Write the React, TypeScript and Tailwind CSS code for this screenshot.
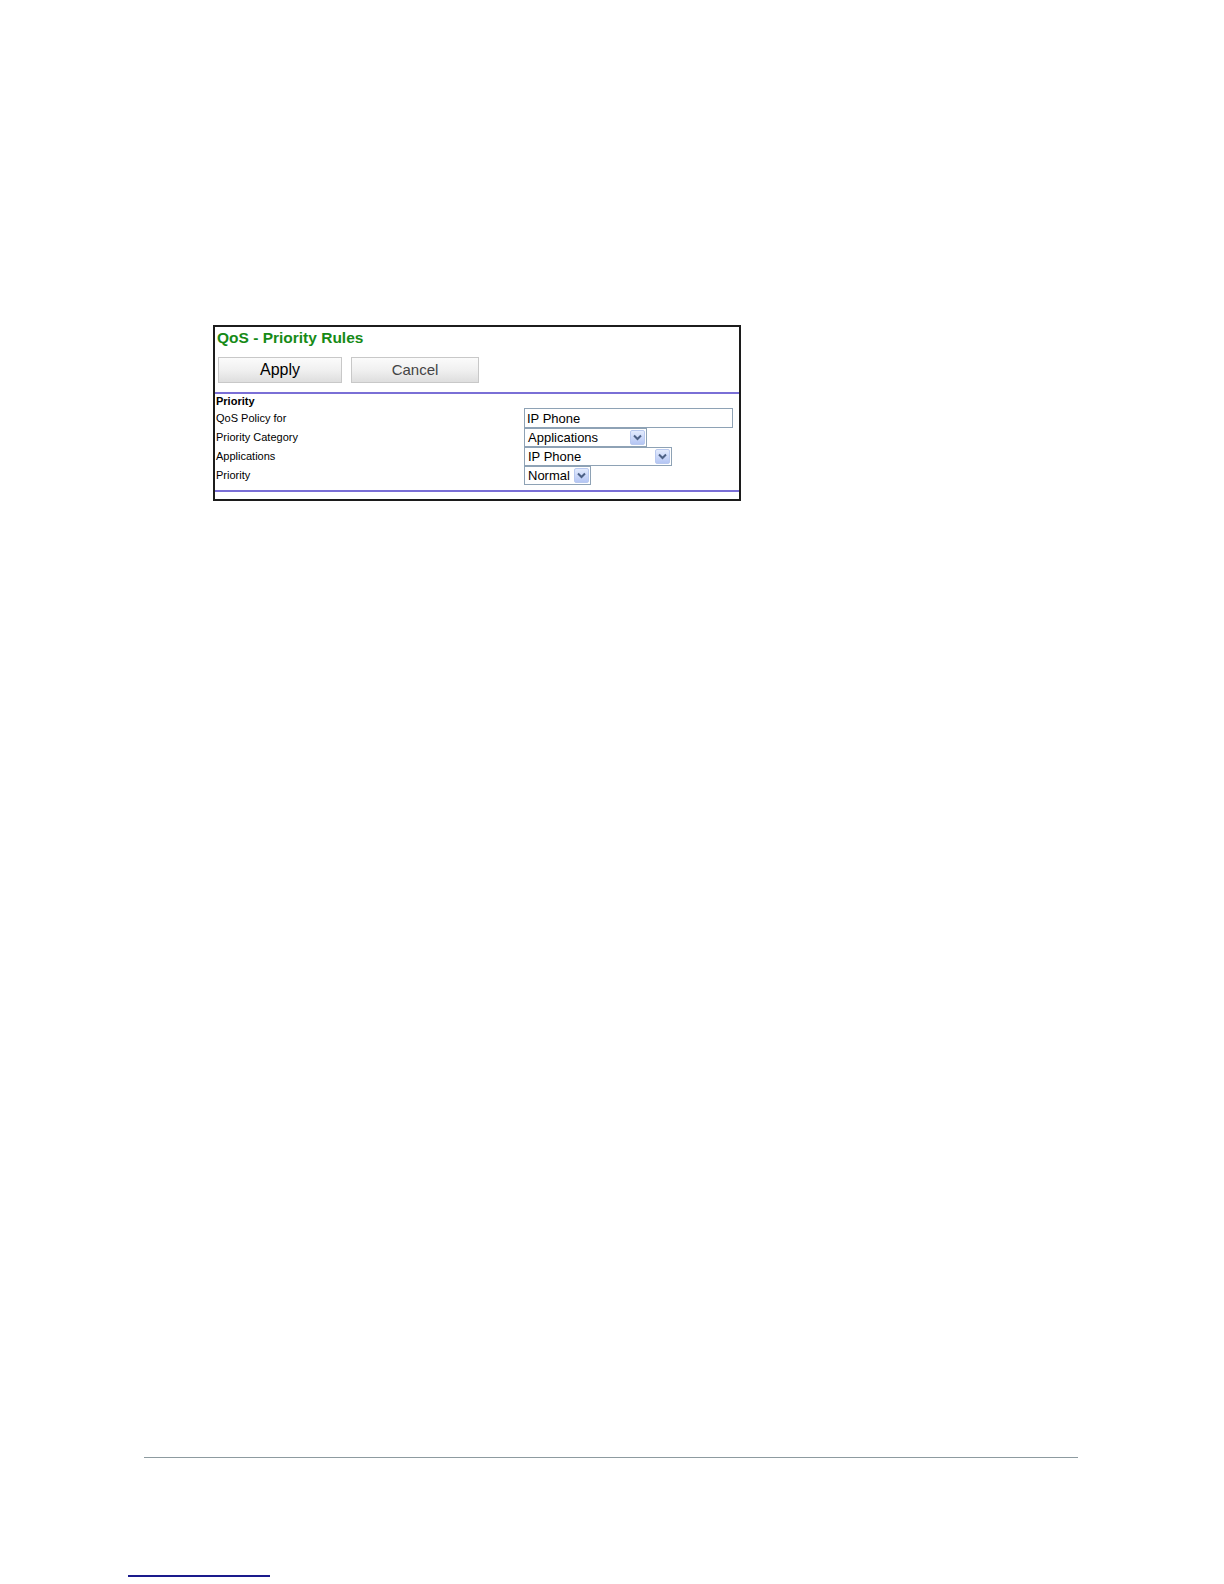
import React from "react"

const font = { fontFamily: '"Liberation Sans", Arial, sans-serif' }

function Chevron() {
  return (
    <span className="flex h-[15px] w-[15px] items-center justify-center rounded-[2px] border border-[#b9c9ef] bg-gradient-to-b from-[#e3ebfd] to-[#b5c6f4]">
      <svg width="9" height="7" viewBox="0 0 9 7">
        <path d="M1 1.5 L4.5 5 L8 1.5" fill="none" stroke="#4d6185" strokeWidth="2" />
      </svg>
    </span>
  )
}

function FakeSelect({ value, width }: { value: string; width: string }) {
  return (
    <div
      className={`flex h-[19px] items-center justify-between border border-[#8ea2b5] bg-white pl-[3px] pr-[1px] text-[13px] leading-none text-black ${width}`}
    >
      <span>{value}</span>
      <Chevron />
    </div>
  )
}

export default function App() {
  return (
    <div className="flex h-[1584px] w-[1224px] flex-col bg-white" style={font}>
      <div className="ml-[213px] mt-[325px] h-[176px] w-[528px] border-2 border-[#1c1c1c] bg-white">
        <div className="pl-[2px] pt-[2px] text-[15.5px] font-bold leading-[18px] text-[#168a16]">
          QoS - Priority Rules
        </div>
        <div className="mt-[10px] flex gap-[9px] pl-[3px]">
          <button className="h-[26px] w-[124px] border border-[#c8c8c8] bg-gradient-to-b from-[#fbfbfb] via-[#f0f0f0] to-[#dedede] text-[16px] text-black">
            Apply
          </button>
          <button className="h-[26px] w-[128px] border border-[#c8c8c8] bg-gradient-to-b from-[#fbfbfb] via-[#f0f0f0] to-[#dedede] text-[15px] text-[#444]">
            Cancel
          </button>
        </div>
        <div className="mt-[9px] h-[2px] bg-[#7a6fd6]" />
        <div className="pl-[1px] text-[11px] font-bold leading-[14px] text-black">Priority</div>
        <div className="grid grid-cols-[309px_1fr] text-[11px] text-black">
          <div className="flex h-[20px] items-center pl-[1px]">QoS Policy for</div>
          <div>
            <div className="flex h-[20px] w-[209px] items-center border border-[#8ea2b5] bg-white pl-[2px] text-[13px] leading-none">
              IP Phone
            </div>
          </div>
          <div className="flex h-[19px] items-center pl-[1px]">Priority Category</div>
          <div>
            <FakeSelect value="Applications" width="w-[123px]" />
          </div>
          <div className="flex h-[19px] items-center pl-[1px]">Applications</div>
          <div>
            <FakeSelect value="IP Phone" width="w-[148px]" />
          </div>
          <div className="flex h-[19px] items-center pl-[1px]">Priority</div>
          <div>
            <FakeSelect value="Normal" width="w-[67px]" />
          </div>
        </div>
        <div className="mt-[5px] h-[2px] bg-[#7a6fd6]" />
      </div>

      <div className="ml-[144px] mt-[956px] h-[1px] w-[934px] bg-[#8d9ba0]" />
      <div className="ml-[128px] mt-[117px] h-[2px] w-[142px] bg-[#1a1a8c]" />
    </div>
  )
}
